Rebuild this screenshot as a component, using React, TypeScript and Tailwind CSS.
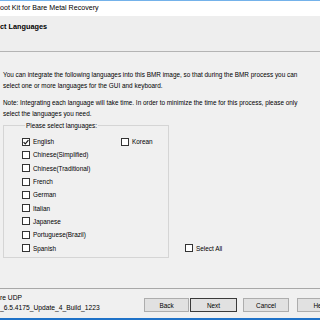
import React from "react";

const leftLangs = [
  "English",
  "Chinese(Simplified)",
  "Chinese(Traditional)",
  "French",
  "German",
  "Italian",
  "Japanese",
  "Portuguese(Brazil)",
  "Spanish",
];

function Box({ checked }: { checked?: boolean }) {
  return (
    <span className="flex h-[8px] w-[8px] shrink-0 items-center justify-center border border-[#333333] bg-white">
      {checked && (
        <svg width="6" height="6" viewBox="0 0 6 6">
          <path d="M0.6 3.1 L2.3 4.8 L5.4 1.1" fill="none" stroke="#1a1a1a" strokeWidth="1.2" />
        </svg>
      )}
    </span>
  );
}

function Check({ label, checked }: { label: string; checked?: boolean }) {
  return (
    <div className="flex h-[13.3px] items-center gap-[3px]">
      <Box checked={checked} />
      <span className="whitespace-nowrap">{label}</span>
    </div>
  );
}

function Btn({ label, w, def }: { label: string; w: string; def?: boolean }) {
  return (
    <div
      className={`flex h-[14px] shrink-0 items-center justify-center border bg-[#e1e1e1] ${w} ${
        def ? "border-[#3a3a3a]" : "border-[#adadad]"
      }`}
    >
      {label}
    </div>
  );
}

export default function App() {
  return (
    <div className="flex h-[320px] w-[320px] flex-col overflow-hidden bg-[#f0f0f0] font-['Liberation_Sans',Arial,sans-serif] text-[6.4px] leading-[11px] text-black">
      {/* title bar */}
      <div className="flex h-[16px] shrink-0 items-center border-t border-[#74b2ea] bg-white text-[7.1px] whitespace-nowrap">
        oot Kit for Bare Metal Recovery
      </div>

      {/* wizard header */}
      <div className="h-[36px] shrink-0 border-b border-[#b4b4b4] bg-[#eeeeee] pt-[5px] text-[7.3px] font-bold whitespace-nowrap">
        ct Languages
      </div>

      <div className="flex-1 px-[3px] pt-[17px]">
        <p className="whitespace-nowrap">
          You can integrate the following languages into this BMR image, so that during the BMR process you can
          <br />
          select one or more languages for the GUI and keyboard.
        </p>
        <p className="mt-[6px] whitespace-nowrap">
          Note: Integrating each language will take time. In order to minimize the time for this process, please only
          <br />
          select the languages you need.
        </p>

        <div className="mt-[1px] flex items-end">
          <fieldset className="w-[166px] shrink-0 border border-[#d5d5d5] pb-[2px] pl-[18px] pt-[4px]">
            <legend className="ml-[3px] px-[1px] leading-[11px]">Please select languages:</legend>
            <div className="flex">
              <div className="w-[99px] shrink-0">
                {leftLangs.map((l) => (
                  <Check key={l} label={l} checked={l === "English"} />
                ))}
              </div>
              <div>
                <Check label="Korean" />
              </div>
            </div>
          </fieldset>
          <div className="ml-[16px] pb-[3px]">
            <Check label="Select All" />
          </div>
        </div>
      </div>

      {/* footer */}
      <div className="flex h-[30px] shrink-0 border-t border-[#a8a8a8]">
        <div className="w-[144px] shrink-0 pt-[4px] text-[6.7px] leading-[10px] whitespace-nowrap">
          re UDP
          <br />
          _6.5.4175_Update_4_Build_1223
        </div>
        <div className="flex shrink-0 pt-[9px]">
          <Btn label="Back" w="w-[45px]" />
          <div className="ml-[1px]">
            <Btn label="Next" w="w-[47px]" def />
          </div>
          <div className="ml-[6px]">
            <Btn label="Cancel" w="w-[46px]" />
          </div>
          <div className="ml-[8px]">
            <Btn label="Help" w="w-[46px]" />
          </div>
        </div>
      </div>
      <div className="h-[2px] shrink-0 bg-[#1f72c8]" />
    </div>
  );
}
